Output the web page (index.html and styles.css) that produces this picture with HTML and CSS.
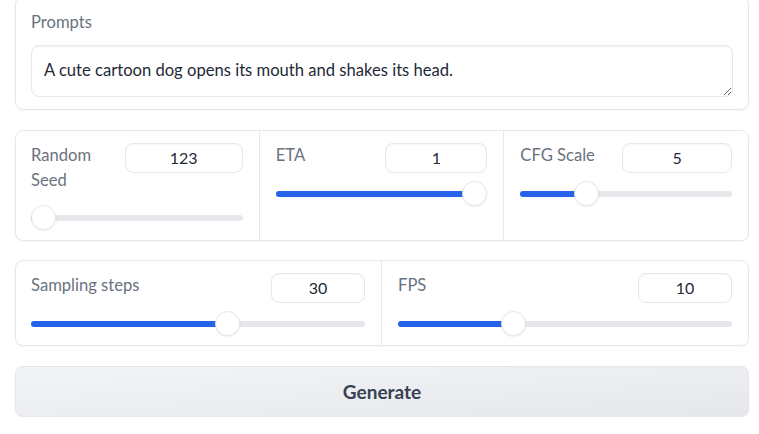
FILE: index.html
```html
<!DOCTYPE html>
<html>
<head>
<meta charset="utf-8">
<link rel="stylesheet" href="styles.css">
</head>
<body>
<div class="page">
  <div class="block prompt-block">
    <label class="label">Prompts</label>
    <textarea class="textarea" rows="2">A cute cartoon dog opens its mouth and shakes its head.</textarea>
  </div>

  <div class="block row">
    <div class="col">
      <div class="head">
        <span class="label">Random Seed</span>
        <div class="num num-seed">123</div>
      </div>
      <div class="slider" style="--p:0.0"><div class="fill"></div><div class="knob"></div></div>
    </div>
    <div class="col">
      <div class="head">
        <span class="label">ETA</span>
        <div class="num num-eta">1</div>
      </div>
      <div class="slider" style="--p:1"><div class="fill"></div><div class="knob"></div></div>
    </div>
    <div class="col">
      <div class="head">
        <span class="label">CFG Scale</span>
        <div class="num num-cfg">5</div>
      </div>
      <div class="slider" style="--p:0.285"><div class="fill"></div><div class="knob"></div></div>
    </div>
  </div>

  <div class="block row row-b">
    <div class="col">
      <div class="head">
        <span class="label">Sampling steps</span>
        <div class="num num-steps">30</div>
      </div>
      <div class="slider" style="--p:0.594"><div class="fill"></div><div class="knob"></div></div>
    </div>
    <div class="col">
      <div class="head">
        <span class="label">FPS</span>
        <div class="num num-fps">10</div>
      </div>
      <div class="slider" style="--p:0.334"><div class="fill"></div><div class="knob"></div></div>
    </div>
  </div>

  <button class="btn">Generate</button>
</div>
</body>
</html>
```

FILE: styles.css
```css
* { box-sizing: border-box; }
html, body { margin: 0; padding: 0; background: #ffffff; }
body {
  font-family: Lato, "Liberation Sans", sans-serif;
  color: #1f2937;
  overflow: hidden;
}
.page {
  display: flex;
  flex-direction: column;
  gap: 20px;
  padding: 0 10px 0 15px;
  margin-top: -4px;
}
.block {
  background: #fff;
  border: 1px solid #e5e7eb;
  border-radius: 8px;
  box-shadow: 0 1px 2px rgba(0,0,0,0.04);
}
.prompt-block {
  padding: 15px 15px 12px 15px;
  display: flex;
  flex-direction: column;
  gap: 13px;
}
.label {
  font-size: 16.6px;
  line-height: 25px;
  color: #6b7280;
}
.head .label { margin-bottom: 4px; }
.prompt-block .label { line-height: 20px; }
.textarea {
  display: block;
  width: 100%;
  height: 52px;
  border: 1px solid #e5e7eb;
  border-radius: 8px;
  padding: 12px 12px;
  font-family: inherit;
  font-size: 16.6px;
  line-height: 24px;
  color: #1f2937;
  box-shadow: inset 0 1px 2px rgba(0,0,0,0.05);
  resize: vertical;
  outline: none;
  background: #fff;
}
.row {
  display: flex;
}
.row .col {
  flex: 1 1 0;
  padding: 12px 16px 10px 16px;
  border-left: 1px solid #e5e7eb;
  display: flex;
  flex-direction: column;
  gap: 8px;
}
.row-b { margin-top: -1px; }
.row-b .col { padding-bottom: 9px; }
.row .col:first-child { border-left: none; padding-left: 15px; }
.head {
  display: flex;
  justify-content: space-between;
  align-items: flex-start;
  gap: 12px;
}
.num {
  height: 30px;
  border: 1px solid #e5e7eb;
  border-radius: 8px;
  font-size: 16px;
  line-height: 28px;
  text-align: center;
  color: #1f2937;
  flex: none;
  box-shadow: inset 0 1px 2px rgba(0,0,0,0.04);
}
.num-seed { width: 118px; }
.num-eta { width: 102px; }
.num-cfg { width: 110px; }
.num-steps { width: 94px; }
.num-fps { width: 94px; }
.slider {
  position: relative;
  height: 25px;
}
.slider::before {
  content: "";
  position: absolute;
  left: 0; right: 0;
  top: 10px;
  height: 6px;
  border-radius: 3px;
  background: #e5e7eb;
}
.fill {
  position: absolute;
  left: 0;
  top: 10px;
  height: 6px;
  border-radius: 3px;
  background: #2563eb;
  width: calc(12.5px + var(--p) * (100% - 25px));
}
.knob {
  position: absolute;
  top: 0;
  left: calc(var(--p) * (100% - 25px));
  width: 25px;
  height: 25px;
  border-radius: 50%;
  background: #fff;
  border: 1px solid #e5e7eb;
  box-shadow: 0 1px 2px rgba(0,0,0,0.08);
}
.btn {
  height: 51px;
  width: 100%;
  border: 1px solid #e5e7eb;
  border-radius: 8px;
  background: linear-gradient(to bottom right, #f3f4f6, #e5e7eb);
  font-family: inherit;
  font-size: 19px;
  font-weight: 700;
  color: #374151;
  box-shadow: 0 1px 2px rgba(0,0,0,0.05);
}
```
